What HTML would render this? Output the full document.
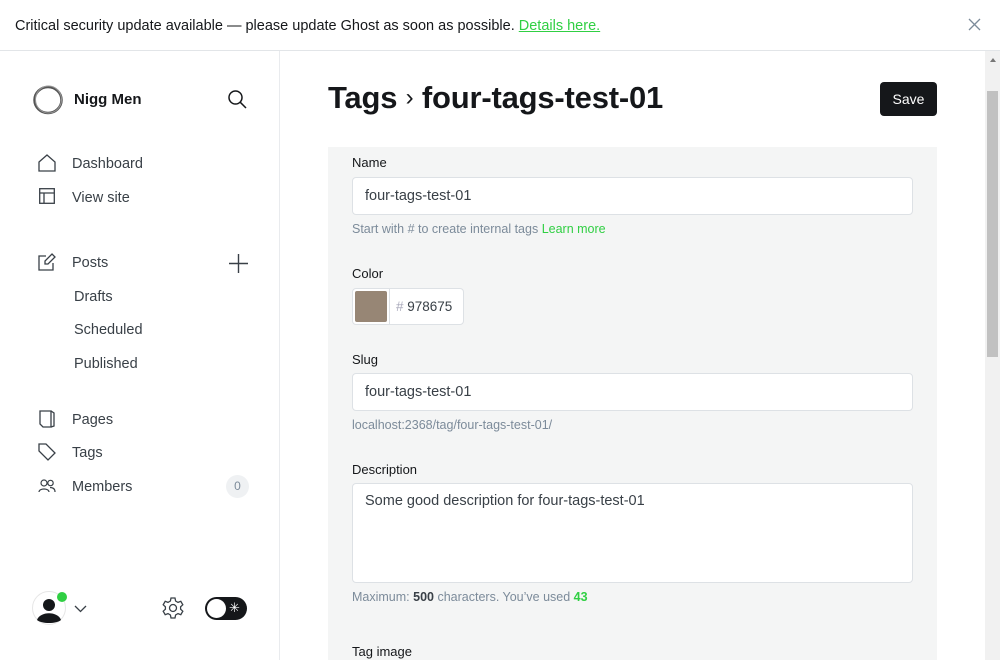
<!DOCTYPE html>
<html><head><meta charset="utf-8"><style>
*{box-sizing:border-box;margin:0;padding:0}
html,body{width:1000px;height:660px;overflow:hidden}
body{font-family:"Liberation Sans",sans-serif;color:#15171a;background:#fff;position:relative}
.banner{position:absolute;left:0;top:0;width:1000px;height:51px;border-bottom:1px solid #e2e5e8;font-size:14.5px;color:#15171a;padding:18px 15px 0}
.banner a{color:#30cf43;text-decoration:underline}
.side{position:absolute;left:0;top:51px;width:280px;height:609px;border-right:1px solid #e9ebee}
.nav{position:absolute;font-size:14.5px;color:#394047}
.ic{position:absolute}
.main{position:absolute;left:281px;top:51px;width:704px;height:609px;overflow:hidden}
h1{position:absolute;left:47px;top:29px;font-size:31px;font-weight:bold;letter-spacing:-0.2px}
.save{position:absolute;left:599px;top:31px;width:57px;height:34px;background:#15171a;color:#fff;border-radius:4px;font-size:14px;text-align:center;line-height:34px}
.form{position:absolute;left:47px;top:96px;width:609px;height:520px;background:#f4f5f5}
.lbl{position:absolute;left:24px;font-size:13px;color:#15171a}
.inp{position:absolute;left:24px;width:561px;height:38px;background:#fff;border:1px solid #dde1e5;border-radius:4px;font-size:14.5px;padding:10px 12px;color:#394047}
.hint{position:absolute;left:24px;font-size:12.5px;color:#7c8b9a}
.scroll{position:absolute;left:985px;top:51px;width:15px;height:609px;background:#f1f1f1}
</style></head><body>
<div class="banner">Critical security update available — please update Ghost as soon as possible. <a>Details here.</a>
<svg style="position:absolute;left:968px;top:18px" width="13" height="13" viewBox="0 0 13 13"><path d="M1 1L12 12M12 1L1 12" stroke="#7c8b9a" stroke-width="1.3"/></svg></div>
<div class="side">
<svg class="ic" style="left:32px;top:33px" width="32" height="32" viewBox="0 0 32 32"><ellipse cx="16" cy="16" rx="13.5" ry="13" fill="none" stroke="#555" stroke-width="2.5"/><ellipse cx="16.5" cy="15.5" rx="13" ry="13.5" fill="none" stroke="#999" stroke-width="1"/></svg>
<div class="nav" style="left:74px;top:40px;font-weight:bold;color:#15171a;font-size:15px">Nigg Men</div>
<svg class="ic" style="left:227px;top:38px" width="20" height="20" viewBox="0 0 20 20"><circle cx="8.5" cy="8.5" r="6.5" fill="none" stroke="#15171a" stroke-width="1.5"/><path d="M13.3 13.3L19 19" stroke="#15171a" stroke-width="1.5"/></svg>
<svg class="ic" style="left:38px;top:103px" width="18" height="18" viewBox="0 0 18 18"><path d="M1 8L9 1L17 8V17H1Z" fill="none" stroke="#394047" stroke-width="1.3"/></svg>
<div class="nav" style="left:72px;top:105px">Dashboard</div>
<svg class="ic" style="left:39px;top:137px" width="16" height="16" viewBox="0 0 16 16"><rect x="0.7" y="0.7" width="14.6" height="14.6" fill="none" stroke="#394047" stroke-width="1.3"/><path d="M1 5H15M5 5V15" stroke="#394047" stroke-width="1.3"/></svg>
<div class="nav" style="left:72px;top:139px">View site</div>
<svg class="ic" style="left:38px;top:202px" width="18" height="18" viewBox="0 0 18 18"><path d="M8 3H1V17H15V10" fill="none" stroke="#394047" stroke-width="1.3"/><path d="M14 1L17 4L10 11H7V8Z" fill="none" stroke="#394047" stroke-width="1.3"/></svg>
<div class="nav" style="left:72px;top:204px">Posts</div>
<svg class="ic" style="left:229px;top:203px" width="19" height="19" viewBox="0 0 19 19"><path d="M9.5 0V19M0 9.5H19" stroke="#394047" stroke-width="1.4"/></svg>
<div class="nav" style="left:74px;top:238px">Drafts</div>
<div class="nav" style="left:74px;top:271px">Scheduled</div>
<div class="nav" style="left:74px;top:305px">Published</div>
<svg class="ic" style="left:39px;top:359px" width="16" height="18" viewBox="0 0 16 18"><path d="M1 1H12V17H4L1 14Z" fill="none" stroke="#394047" stroke-width="1.3"/><path d="M12 1L15 3V16L12 17" fill="none" stroke="#394047" stroke-width="1.3"/></svg>
<div class="nav" style="left:72px;top:361px">Pages</div>
<svg class="ic" style="left:38px;top:392px" width="18" height="18" viewBox="0 0 18 18"><path d="M1 1H8L17 10L10 17L1 8Z" fill="none" stroke="#394047" stroke-width="1.3"/></svg>
<div class="nav" style="left:72px;top:394px">Tags</div>
<svg class="ic" style="left:38px;top:428px" width="18" height="14" viewBox="0 0 18 14"><circle cx="6" cy="4" r="3" fill="none" stroke="#394047" stroke-width="1.2"/><circle cx="12.5" cy="4" r="2.7" fill="none" stroke="#394047" stroke-width="1.2"/><path d="M1 13C1 9 11 9 11 13M12 8.5C15 8.5 17 10 17 13" fill="none" stroke="#394047" stroke-width="1.2"/></svg>
<div class="nav" style="left:72px;top:428px">Members</div>
<div style="position:absolute;left:226px;top:424px;width:23px;height:23px;border-radius:12px;background:#eff1f3;font-size:12px;color:#7c8b9a;text-align:center;line-height:23px">0</div>
<svg class="ic" style="left:32px;top:540px" width="36" height="36" viewBox="0 0 36 36"><circle cx="17" cy="17" r="16.5" fill="#fff" stroke="#e6e6e6"/><circle cx="17" cy="14" r="6" fill="#15171a"/><path d="M5 29C8 20 26 20 29 29C24 33 10 33 5 29Z" fill="#15171a"/><circle cx="30" cy="6" r="5" fill="#30cf43"/></svg>
<svg class="ic" style="left:74px;top:554px" width="13" height="8" viewBox="0 0 13 8"><path d="M1 1L6.5 6.5L12 1" fill="none" stroke="#394047" stroke-width="1.3"/></svg>
<svg class="ic" style="left:162px;top:546px" width="22" height="22" viewBox="0 0 22 22"><path d="M9 1H13L13.6 4L16 5.4L18.8 4.3L20.8 7.8L18.6 9.8V12.2L20.8 14.2L18.8 17.7L16 16.6L13.6 18L13 21H9L8.4 18L6 16.6L3.2 17.7L1.2 14.2L3.4 12.2V9.8L1.2 7.8L3.2 4.3L6 5.4L8.4 4Z" fill="none" stroke="#394047" stroke-width="1.3"/><circle cx="11" cy="11" r="3.5" fill="none" stroke="#394047" stroke-width="1.3"/></svg>
<div style="position:absolute;left:205px;top:546px;width:42px;height:23px;border-radius:12px;background:#15171a"><div style="position:absolute;left:2px;top:2px;width:19px;height:19px;border-radius:10px;background:#fff"></div><div style="position:absolute;left:24px;top:3px;color:#fff;font-size:13px">✳</div></div>
</div>
<div class="main">
<h1>Tags <span style="font-weight:normal;font-size:24px;position:relative;top:-3px">›</span> four-tags-test-01</h1>
<div class="save">Save</div>
<div class="form">
<div class="lbl" style="top:8px">Name</div>
<div class="inp" style="top:30px">four-tags-test-01</div>
<div class="hint" style="top:75px">Start with # to create internal tags <span style="color:#30cf43">Learn more</span></div>
<div class="lbl" style="top:119px">Color</div>
<div style="position:absolute;left:24px;top:141px;width:112px;height:37px;background:#fff;border:1px solid #dde1e5;border-radius:4px"><div style="position:absolute;left:2px;top:2px;width:32px;height:31px;background:#978675;border-radius:2px"></div><div style="position:absolute;left:36px;top:0;height:35px;border-left:1px solid #dde1e5"></div><div style="position:absolute;left:43px;top:10px;font-size:13.5px;color:#394047"><span style="color:#aab">#</span> 978675</div></div>
<div class="lbl" style="top:205px">Slug</div>
<div class="inp" style="top:226px">four-tags-test-01</div>
<div class="hint" style="top:271px">localhost:2368/tag/four-tags-test-01/</div>
<div class="lbl" style="top:315px">Description</div>
<div class="inp" style="top:336px;height:100px;padding-top:9px">Some good description for four-tags-test-01</div>
<div class="hint" style="top:443px">Maximum: <b style="color:#394047">500</b> characters. You’ve used <b style="color:#30cf43">43</b></div>
<div class="lbl" style="top:497px">Tag image</div>
</div>
</div>
<div class="scroll"><div style="position:absolute;left:5px;top:7px;border:3px solid transparent;border-bottom:4px solid #777;border-top:0"></div><div style="position:absolute;left:2px;top:40px;width:11px;height:266px;background:#c1c1c1"></div></div>
</body></html>
